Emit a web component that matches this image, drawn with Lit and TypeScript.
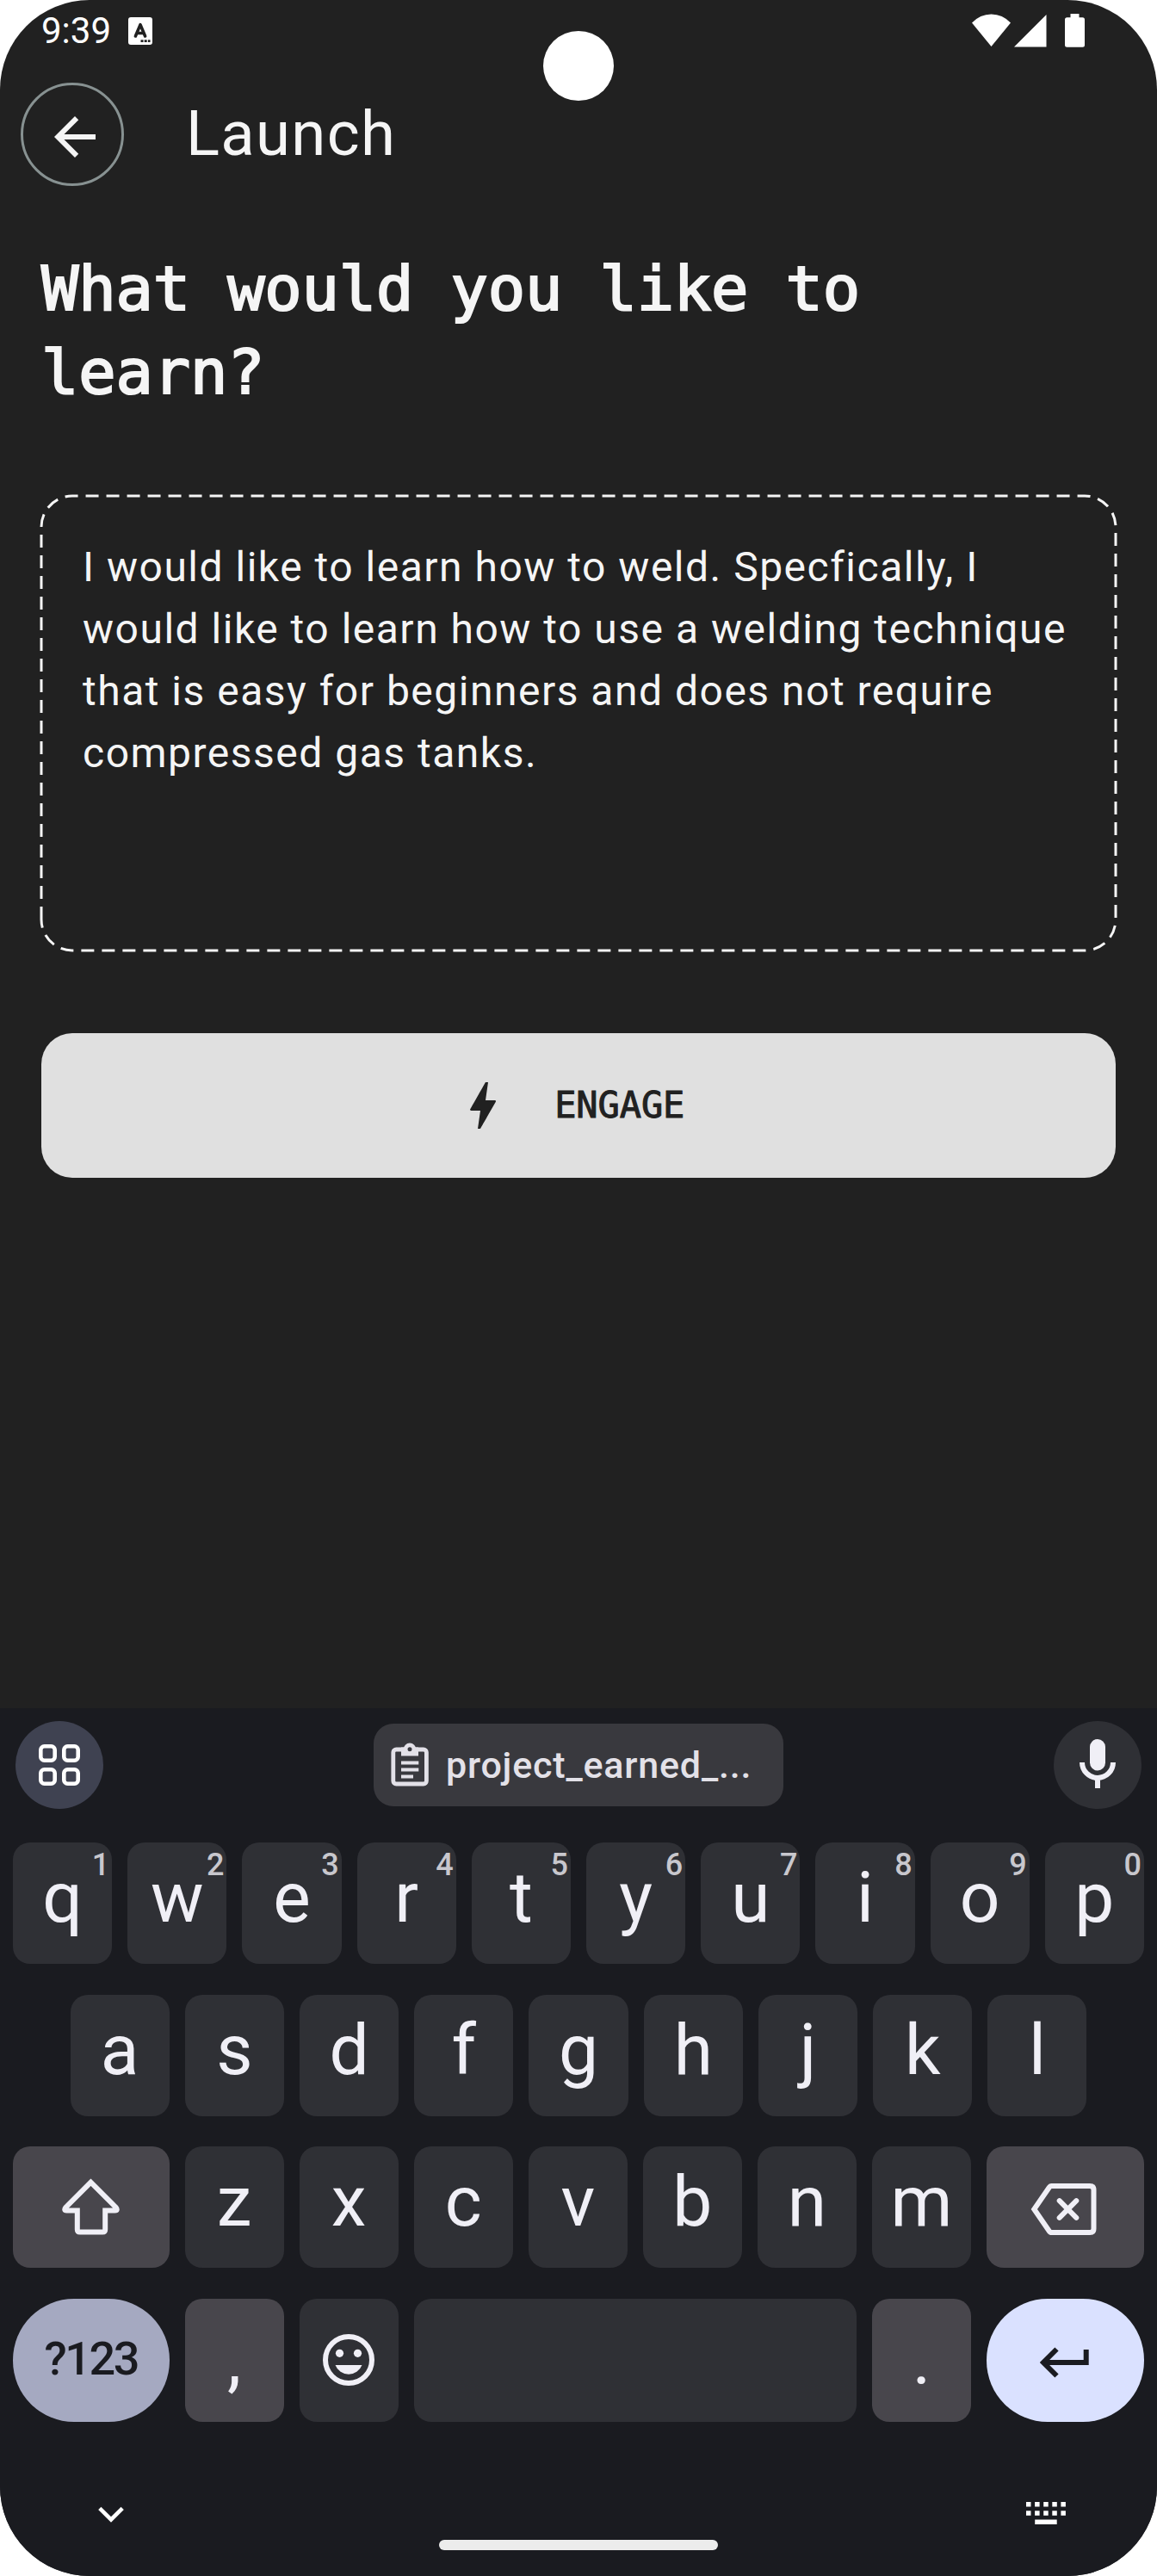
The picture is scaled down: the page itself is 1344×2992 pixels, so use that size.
import { LitElement, html, svg, css, nothing } from "lit";
import { customElement } from "lit/decorators.js";

const ROW_TOP = [..."qwertyuiop"];
const ROW_HOME = [..."asdfghjkl"];
const ROW_BOTTOM = [..."zxcvbnm"];

@customElement("soft-keyboard")
export class SoftKeyboard extends LitElement {
  static styles = css`
    :host {
      display: flex;
      flex-direction: column;
      box-sizing: border-box;
      height: 1008px;
      background: #1a1b20;
      color: #f0eff6;
      font-family: Roboto, sans-serif;
    }
    svg { display: block; }
    .strip {
      display: flex;
      justify-content: space-between;
      align-items: center;
      height: 102px;
      padding: 15px 18px 39px;
    }
    .round {
      width: 102px;
      height: 102px;
      border-radius: 50%;
      background: #2f3035;
      display: grid;
      place-items: center;
    }
    .tools { background: #3f4251; }
    .chip {
      display: flex;
      align-items: center;
      box-sizing: border-box;
      width: 476px;
      height: 96px;
      padding-left: 20px;
      gap: 20px;
      border-radius: 23px;
      background: #39393e;
      color: #e3e1e8;
      font-size: 43px;
      font-weight: 500;
      letter-spacing: 0.8px;
      line-height: 98px;
      white-space: nowrap;
    }
    .row {
      display: grid;
      gap: 18px;
      height: 141px;
      margin: 0 15px 35.6px;
    }
    .top { grid-template-columns: repeat(10, 1fr); }
    .home { grid-template-columns: repeat(9, 1fr); margin-left: 81.5px; margin-right: 81.5px; }
    .bottom { grid-template-columns: 181.5px repeat(7, 1fr) 183px; }
    .last { grid-template-columns: 181.5px 115px 115px 1fr 115px 183px; margin-bottom: 0; }
    .key {
      position: relative;
      border-radius: 20px;
      background: #2f3035;
      font-size: 82px;
      line-height: 129px;
      text-align: center;
    }
    .icon { display: grid; place-items: center; }
    .alt { background: #48464c; }
    .punct { line-height: 143px; }
    .hint {
      position: absolute;
      top: 6px;
      right: 3px;
      font-size: 36px;
      font-weight: 500;
      line-height: 40px;
      color: #c8c7cd;
    }
    .symbols {
      border-radius: 71px;
      background: #a5a9c1;
      color: #1a1b20;
      font-size: 54px;
      font-weight: 500;
      line-height: 139px;
      letter-spacing: -2.4px;
    }
    .enter { border-radius: 71px; background: #dae1ff; }
    .nav {
      flex: 1;
      display: grid;
      grid-template-columns: 1fr 324px 1fr;
      padding: 0 106px 30px 114px;
      align-items: end;
    }
    .down { margin-bottom: 31px; }
    .ime { margin-bottom: 29px; justify-self: end; }
    .pill { width: 324px; height: 12px; border-radius: 6px; background: #ececec; margin-left: -4px; }
  `;

  private letter(ch: string, hint?: string) {
    return html`<div class="key">${ch}${hint ? html`<span class="hint">${hint}</span>` : nothing}</div>`;
  }

  render() {
    return html`
      <div class="strip">
        <div class="round tools">
          <svg width="48" height="48" viewBox="0 0 48 48" fill="none" stroke="#fff" stroke-width="4.6">
            ${[[0, 0], [27, 0], [0, 27], [27, 27]].map(
              ([x, y]) => svg`<rect x=${x + 2.3} y=${y + 2.3} width="16.4" height="16.4" rx="4.2"/>`
            )}
          </svg>
        </div>
        <div class="chip">
          <svg width="44" height="52" viewBox="454 2024.5 44 52" fill="none" stroke="#e3e1e8">
            <rect x="456.8" y="2032.5" width="38.6" height="40" rx="3.5" stroke-width="4.8"/>
            <path d="M466 2030h20v10h-20z" fill="#e3e1e8" stroke="none"/>
            <circle cx="476" cy="2032.3" r="4.9" stroke-width="4.8" fill="#39393e"/>
            <path d="M466 2048h20.3M466 2056h20.3M466 2064h14" stroke-width="4"/>
          </svg>
          <span>project_earned_...</span>
        </div>
        <div class="round">
          <svg width="60" height="72" viewBox="1245 2014 60 72">
            <rect x="1266" y="2020" width="18" height="36.4" rx="9" fill="#f0eff6"/>
            <path d="M1257 2047a18 18 0 0 0 36 0M1275 2065v12" fill="none" stroke="#f0eff6" stroke-width="6"/>
          </svg>
        </div>
      </div>
      <div class="row top">${ROW_TOP.map((c, i) => this.letter(c, String((i + 1) % 10)))}</div>
      <div class="row home">${ROW_HOME.map((c) => this.letter(c))}</div>
      <div class="row bottom">
        <div class="key alt icon">
          <svg width="74" height="72" viewBox="68.5 2527.5 74 72" fill="none" stroke="#f0eff6" stroke-width="6">
            <path d="M105 2534.2L76 2563.2Q73 2567 77 2567H89.3V2589Q89.3 2592 92.3 2592H118.7Q121.7 2592 121.7 2589V2567H133Q137 2567 134 2563.2Z"/>
          </svg>
        </div>
        ${ROW_BOTTOM.map((c) => this.letter(c))}
        <div class="key alt icon">
          <svg width="84" height="72" viewBox="1195.5 2528 84 72" fill="none" stroke="#f0eff6" stroke-width="6">
            <path d="M1222 2539H1266.5Q1271 2539 1271 2543.5V2588.5Q1271 2593 1266.5 2593H1222Q1220.3 2593 1219 2591L1201.8 2566L1219 2541Q1220.3 2539 1222 2539Z"/>
            <path d="M1231.2 2556.2l19.6 19.6M1250.8 2556.2l-19.6 19.6" stroke-linecap="round"/>
          </svg>
        </div>
      </div>
      <div class="row last">
        <div class="key symbols">?123</div>
        <div class="key alt punct">,</div>
        <div class="key icon">
          <svg width="60" height="60" viewBox="0 0 60 60" fill="#f0eff6">
            <circle cx="30" cy="30" r="27" fill="none" stroke="#f0eff6" stroke-width="6"/>
            <circle cx="19.5" cy="22.3" r="4.6"/>
            <circle cx="40.5" cy="22.3" r="4.6"/>
            <path d="M14.5 36h31a16.6 16.6 0 0 1-31 0z"/>
          </svg>
        </div>
        <div class="key"></div>
        <div class="key alt punct">.</div>
        <div class="key icon enter">
          <svg width="72" height="72" viewBox="1201.5 2705 72 72" fill="none" stroke="#1a1b20" stroke-width="6">
            <path d="M1261.2 2729V2744H1212M1227 2728.5L1211.5 2744L1227 2759.5"/>
          </svg>
        </div>
      </div>
      <div class="nav">
        <svg class="down" width="30" height="20" viewBox="0 0 30 20" fill="none" stroke="#fff" stroke-width="4.6">
          <path d="M1.8 2.3L15 15.5L28.2 2.3"/>
        </svg>
        <div class="pill"></div>
        <svg class="ime" width="46" height="27" viewBox="0 0 46 27" fill="#fff">
          ${[0, 1, 2, 3, 4].map(
            (i) => svg`<path d="M${i * 10.1} 0h5.5v5.5h-5.5zM${i * 10.1} 10.2h5.5v5.5h-5.5z"/>`
          )}
          <path d="M10.2 20.4h25.5v5.5H10.2z"/>
        </svg>
      </div>
    `;
  }
}

@customElement("app-root")
export class AppRoot extends LitElement {
  static styles = css`
    :host {
      display: block;
      width: 1344px;
      height: 2992px;
      background: #fff;
      font-family: Roboto, sans-serif;
      color: #f5f5f5;
    }
    svg { display: block; }
    .screen {
      position: relative;
      display: flex;
      flex-direction: column;
      height: 2992px;
      overflow: hidden;
      border-radius: 104px;
      background: #212121;
    }
    .camera {
      position: absolute;
      left: 631px;
      top: 35.5px;
      width: 82px;
      height: 81px;
      border-radius: 50%;
      background: #fff;
    }
    .status {
      display: flex;
      align-items: center;
      height: 72px;
      padding: 0 83px 0 48px;
      color: #fff;
      font-size: 42px;
      line-height: 72px;
    }
    .badge { margin-left: 20px; }
    .signals { margin-left: auto; }
    .bar {
      display: flex;
      align-items: center;
      gap: 72px;
      margin-top: 24px;
      padding-left: 24px;
      height: 120px;
      font-size: 72.5px;
      line-height: 118px;
      letter-spacing: 1.3px;
    }
    .back {
      box-sizing: border-box;
      width: 120px;
      height: 120px;
      padding: 24px 0 0 24px;
      border: 3px solid #879191;
      border-radius: 50%;
    }
    .title {
      margin: 71px 48px 94px;
      font: 400 72px/96.5px "DejaVu Sans Mono", monospace;
      letter-spacing: -0.12px;
      -webkit-text-stroke: 2.2px #f5f5f5;
    }
    .field {
      position: relative;
      box-sizing: border-box;
      height: 531px;
      margin: 0 46px;
      padding: 49px 50px;
      font-size: 48px;
      line-height: 72px;
      letter-spacing: 1.5px;
      white-space: pre-line;
    }
    .outline { position: absolute; left: 0; top: 0; }
    .engage {
      display: flex;
      align-items: center;
      height: 168px;
      margin: 95px 48px 0;
      padding-left: 476.7px;
      gap: 47.5px;
      border-radius: 36px;
      background: #e0e0e0;
      color: #212121;
      font: 400 42px/170px "DejaVu Sans Mono", monospace;
      letter-spacing: -0.1px;
      -webkit-text-stroke: 1px #212121;
    }
    .keyboard { margin-top: auto; }
  `;

  render() {
    return html`
      <div class="screen">
        <div class="status">
          <span>9:39</span>
          <svg class="badge" width="28" height="32" viewBox="0 0 28 32">
            <rect width="28" height="32" rx="3" fill="#fff"/>
            <path d="M8.4 22L14 8.6L19.6 22M10 18.5h8" fill="none" stroke="#212121" stroke-width="3.6" stroke-linejoin="round" stroke-linecap="round"/>
            <path d="M14.5 26.3h3v2.8h-3zM18.7 26.3h3v2.8h-3zM22.9 26.3h2.6v2.8h-2.6z" fill="#212121"/>
          </svg>
          <svg class="signals" width="132" height="40" viewBox="1129 16 132 40" fill="#fff">
            <path d="M1151.5 54L1129 26.5Q1138.5 16.5 1151.5 16.5T1174 26.5Z"/>
            <path d="M1178 54.5H1215.5V17Z"/>
            <path d="M1243.5 16h10v4.2h4q2.5 0 2.5 2.5v29.5q0 2.5-2.5 2.5h-18q-2.5 0-2.5-2.5v-29.5q0-2.5 2.5-2.5h4z"/>
          </svg>
        </div>
        <div class="bar">
          <div class="back">
            <svg width="72" height="72" viewBox="0 0 24 24" fill="#f5f5f5">
              <path d="M20 11H7.83l5.59-5.59L12 4l-8 8 8 8 1.41-1.41L7.83 13H20v-2z"/>
            </svg>
          </div>
          <span>Launch</span>
        </div>
        <div class="title">What would you like to<br>learn?</div>
        <div class="field"><svg class="outline" width="1252" height="532" viewBox="46 574 1252 532" fill="none" stroke="#f5f5f5" stroke-width="3" stroke-dasharray="15 9"><path d="M48 1068V612A36 36 0 0 1 84 576H1260A36 36 0 0 1 1296 612V1068A36 36 0 0 1 1260 1104H84A36 36 0 0 1 48 1068"/></svg>I would like to learn how to weld. Specfically, I<br>would like to learn how to use a welding technique<br>that is easy for beginners and does not require<br>compressed gas tanks.</div>
        <div class="engage">
          <svg width="72" height="72" viewBox="0 0 24 24" fill="#212121">
            <path d="M11 21h-1l1-7H7.5c-.58 0-.57-.32-.38-.66.19-.34.05-.08.07-.12C8.48 10.94 10.42 7.54 13 3h1l-1 7h3.5c.49 0 .56.33.47.51l-.07.15C12.96 17.55 11 21 11 21z"/>
          </svg>
          <span>ENGAGE</span>
        </div>
        <soft-keyboard class="keyboard"></soft-keyboard>
        <div class="camera"></div>
      </div>
    `;
  }
}
